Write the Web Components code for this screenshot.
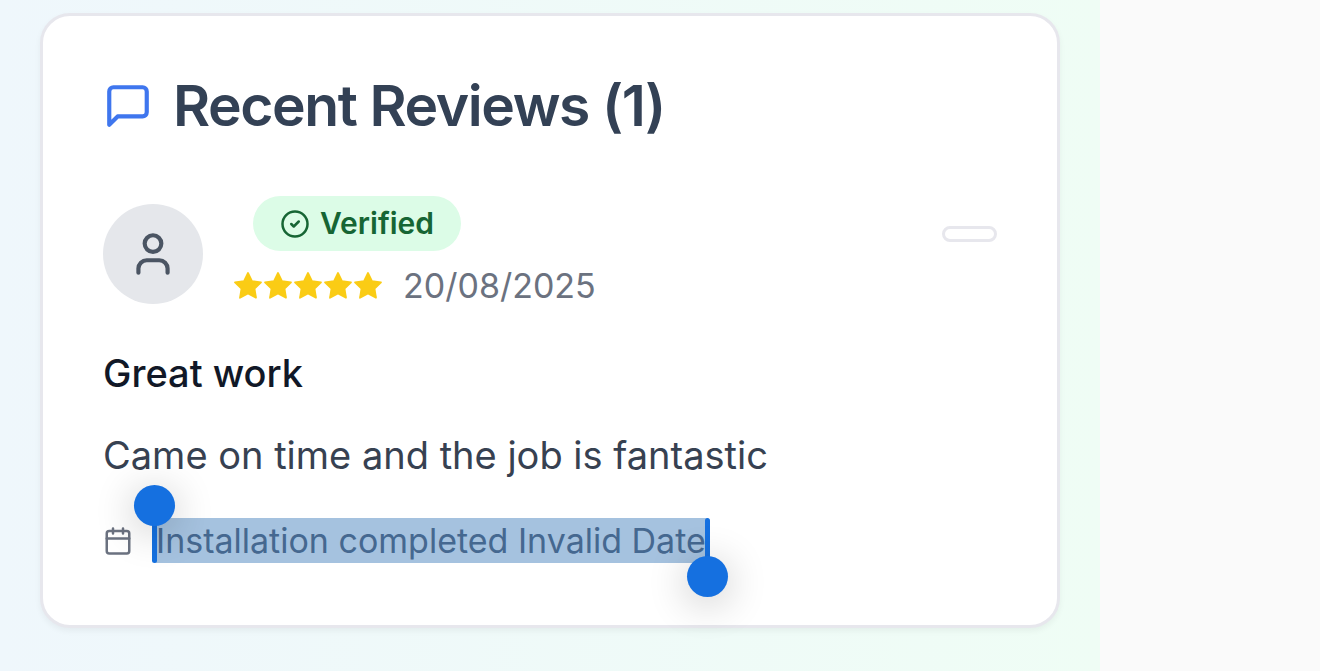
<!DOCTYPE html>
<html lang="en">
<head>
<meta charset="utf-8">
<meta name="viewport" content="width=device-width, initial-scale=1">
<title>Recent Reviews</title>
<style>
  html { background: #fafafa; }
  body { margin: 0; font-family: Inter, "Liberation Sans", sans-serif; color: #111827; }
</style>
</head>
<body>
<reviews-page>
  <reviews-card heading="Recent Reviews (1)">
    <review-item date="20/08/2025">
      <verified-badge slot="badge">Verified</verified-badge>
      <span slot="title">Great work</span>
      <span slot="body">Came on time and the job is fantastic</span>
      <selected-text slot="note">Installation completed Invalid Date</selected-text>
    </review-item>
  </reviews-card>
</reviews-page>

<script>
  const define = (name, html, setup) => {
    const template = document.createElement('template');
    template.innerHTML = html;
    customElements.define(name, class extends HTMLElement {
      constructor() {
        super();
        this.attachShadow({ mode: 'open' }).append(template.content.cloneNode(true));
      }
      connectedCallback() { if (setup) setup(this, this.shadowRoot); }
    });
  };

  const icons = {
    message: '<path d="M21 15a2 2 0 0 1-2 2H7l-4 4V5a2 2 0 0 1 2-2h14a2 2 0 0 1 2 2z"/>',
    user: '<path d="M19 21v-2a4 4 0 0 0-4-4H9a4 4 0 0 0-4 4v2"/><circle cx="12" cy="7" r="4"/>',
    check: '<circle cx="12" cy="12" r="10"/><path d="m9 12 2 2 4-4"/>',
    calendar: '<path d="M8 2v4M16 2v4M3 10h18"/><rect x="3" y="4" width="18" height="18" rx="2"/>',
    star: '<path fill="currentColor" stroke-width="1.4" d="M12 1.6 15.2 8.1 22.4 9.1 17.2 14.2 18.4 21.4 12 18 5.6 21.4 6.8 14.2 1.6 9.1 8.8 8.1z"/>'
  };

  define('line-icon', `
    <style>
      :host { display: block; flex: none; width: 30px; height: 30px; }
      :host([size="large"]) { width: 50px; height: 50px; }
      svg { display: block; width: 100%; height: 100%; fill: none; stroke: currentColor;
            stroke-width: 2; stroke-linecap: round; stroke-linejoin: round; }
    </style>
    <svg viewBox="0 0 24 24" aria-hidden="true"></svg>`,
    (host, root) => { root.querySelector('svg').innerHTML = icons[host.getAttribute('name')]; });

  define('star-rating', `
    <style>
      :host { display: flex; color: #facc15; }
    </style>`,
    (host, root) => {
      for (let i = 0; i < Number(host.getAttribute('value')); i++) {
        const star = document.createElement('line-icon');
        star.setAttribute('name', 'star');
        root.append(star);
      }
    });

  define('verified-badge', `
    <style>
      :host { display: inline-flex; align-items: center; gap: 10px; box-sizing: border-box;
              padding: 7px 27px; border-radius: 28px; background: #dcfce7; color: #166534;
              font-size: 30px; line-height: 41px; font-weight: 600; }
    </style>
    <line-icon name="check"></line-icon><slot></slot>`);

  define('selected-text', `
    <style>
      :host { display: inline-block; position: relative; background: #a5c2df; color: #456890;
              line-height: 45px; padding: 0 2px; }
      i { position: absolute; width: 5px; height: 45px; top: 0; background: #1570e0; border-radius: 3px; }
      i::before { content: ""; position: absolute; left: -18px; width: 41px; height: 41px;
                  border-radius: 50%; background: #1570e0; box-shadow: 0 6px 40px rgba(0, 0, 0, .24); }
      .start { left: -2px; }
      .start::before { bottom: 37px; }
      .end { right: -2px; }
      .end::before { top: 38px; }
    </style>
    <slot></slot><i class="start"></i><i class="end"></i>`);

  define('review-item', `
    <style>
      :host { display: block; }
      header { display: flex; align-items: center; gap: 30px; }
      .avatar { display: grid; place-items: center; flex: none; width: 100px; height: 100px;
                border-radius: 50%; background: #e5e7eb; color: #4b5563; }
      .meta { flex: 1; min-width: 0; }
      .badge { display: flex; padding-left: 20px; }
      .rated { display: flex; align-items: center; gap: 20px; margin-top: 10px; }
      time { font-size: 34px; line-height: 50px; color: #6b7280; }
      .status { align-self: flex-start; box-sizing: border-box; width: 55px; height: 16px; margin-top: 30px;
                border: 3px solid #e7e7ed; border-radius: 8px; }
      h3, p { margin: 0; font-size: 38px; }
      h3 { margin-top: 32px; line-height: 60px; font-weight: 500; }
      p { margin-top: 20px; line-height: 65px; color: #374151; }
      footer { display: flex; align-items: center; gap: 21px; margin-top: 30px;
               font-size: 34px; color: #6b7280; }
    </style>
    <header>
      <div class="avatar"><line-icon name="user" size="large"></line-icon></div>
      <div class="meta">
        <div class="badge"><slot name="badge"></slot></div>
        <div class="rated"><star-rating value="5"></star-rating><time></time></div>
      </div>
      <span class="status"></span>
    </header>
    <h3><slot name="title"></slot></h3>
    <p><slot name="body"></slot></p>
    <footer><line-icon name="calendar"></line-icon><slot name="note"></slot></footer>`,
    (host, root) => { root.querySelector('time').textContent = host.getAttribute('date'); });

  define('reviews-card', `
    <style>
      :host { display: block; box-sizing: border-box; padding: 60px 60px 62px; background: #fff;
              border: 3px solid #e7e7ed; border-radius: 30px; box-shadow: 0 3px 6px rgba(0, 0, 0, .05); }
      h2 { display: flex; align-items: center; gap: 20px; margin: 0 0 60px; color: #334155;
           font-size: 57px; line-height: 60px; font-weight: 600; letter-spacing: -0.025em; }
      line-icon { color: #3f76ee; }
    </style>
    <h2><line-icon name="message" size="large"></line-icon><span></span></h2>
    <slot></slot>`,
    (host, root) => { root.querySelector('h2 span').textContent = host.getAttribute('heading'); });

  define('reviews-page', `
    <style>
      :host { display: grid; grid-template-columns: minmax(0, 5fr) minmax(0, 1fr); min-height: 100vh; }
      main { box-sizing: border-box; padding: 13px 40px 43px;
             background: linear-gradient(to right, #eff7fc, #effdf5); }
    </style>
    <main><slot></slot></main>`);
</script>
</body>
</html>
